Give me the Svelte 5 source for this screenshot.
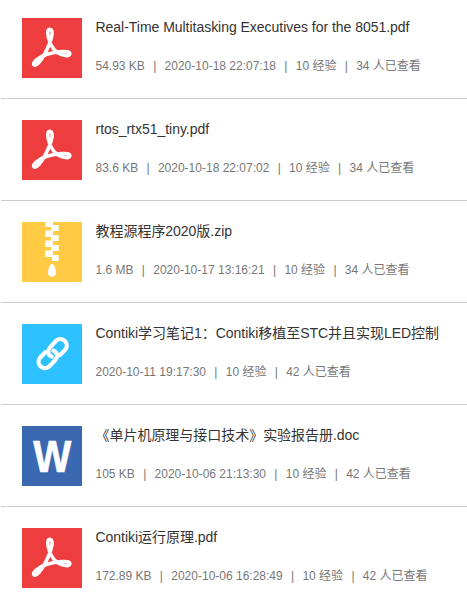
<script>
  const files = [
    { type: 'pdf', title: 'Real-Time Multitasking Executives for the 8051.pdf', meta: ['54.93 KB', '2020-10-18 22:07:18', '10 经验', '34 人已查看'] },
    { type: 'pdf', title: 'rtos_rtx51_tiny.pdf', meta: ['83.6 KB', '2020-10-18 22:07:02', '10 经验', '34 人已查看'] },
    { type: 'zip', title: '教程源程序2020版.zip', meta: ['1.6 MB', '2020-10-17 13:16:21', '10 经验', '34 人已查看'] },
    { type: 'link', title: 'Contiki学习笔记1：Contiki移植至STC并且实现LED控制', meta: ['2020-10-11 19:17:30', '10 经验', '42 人已查看'] },
    { type: 'doc', title: '《单片机原理与接口技术》实验报告册.doc', meta: ['105 KB', '2020-10-06 21:13:30', '10 经验', '42 人已查看'] },
    { type: 'pdf', title: 'Contiki运行原理.pdf', meta: ['172.89 KB', '2020-10-06 16:28:49', '10 经验', '42 人已查看'] }
  ];
</script>

<ul class="list">
  {#each files as file}
    <li class="item">
      <svg class="icon {file.type}" viewBox="0 0 60 60" aria-hidden="true">
        {#if file.type === 'pdf'}
          <path
            d="M27.700 11.300C32 11.300 30 20 26.500 28C23 37 16 47.300 13 47.300C8.500 46 16 39 25 36.300C34 33.500 47.800 32.200 47.800 35.500C47.800 39.500 38 37.500 32.500 32C27 26 23.400 11.300 27.700 11.300Z"
            fill="none" stroke="#fff" stroke-width="3.600" stroke-linejoin="round"
          />
        {:else if file.type === 'zip'}
          <path
            fill="#fff"
            d="M23.300 0H30V3H36.700V9H30V13H36.700V19H30V23H36.700V29H30V33H36.700V39H30V35H23.300V28.500H30V25H23.300V18.500H30V15H23.300V8.500H30V5H23.300Z"
          />
          <path fill="#fff" d="M29 0H31V39H30V35H29Z" />
          <path fill="#fff" d="M30 42C32.500 42 34 48 34 50.800C34 53.300 32.300 54.800 30 54.800S26 53.300 26 50.800C26 48 27.500 42 30 42Z" />
        {:else if file.type === 'link'}
          <g fill="none" stroke="#fff" stroke-width="4.200" stroke-linecap="round">
            <path d="M29.800 32.600C25.600 31 25.200 26.500 28 23.300L34.300 16.600A6.400 6.400 0 0 1 43.300 25.600L38 31" />
            <path d="M31.500 26.700C35.700 28.300 36.100 32.800 33.300 36L27 42.700A6.400 6.400 0 0 1 18 33.700L23.300 28.300" />
          </g>
        {:else}
          <text x="11.200" y="45.700" textLength="38" lengthAdjust="spacingAndGlyphs">W</text>
        {/if}
      </svg>
      <div class="body">
        <div class="title">{file.title}</div>
        <div class="meta">
          {#each file.meta as part, i}{#if i > 0}<i>|</i>{/if}<span>{part}</span>{/each}
        </div>
      </div>
    </li>
  {/each}
</ul>

<style>
  :global(body) {
    background: #fff;
    overflow: hidden;
  }
  .list {
    list-style: none;
    margin: 0 0 0 1px;
    padding: 0;
    height: 606px;
    overflow: hidden;
    font-family: "Liberation Sans", "Noto Sans CJK SC", sans-serif;
  }
  .item {
    display: flex;
    box-sizing: border-box;
    height: 102px;
    padding: 21px 0 0 21px;
    border-bottom: 1px solid #ccc;
  }
  .item:first-child {
    height: 99px;
    padding-top: 18px;
  }
  .icon {
    flex: none;
    width: 60px;
    height: 60px;
    margin-right: 13.5px;
  }
  .pdf { background: #ee3d3f; }
  .zip { background: #ffcb45; }
  .link { background: #2dc2ff; }
  .doc { background: #3b69b1; }
  .icon text {
    fill: #fff;
    stroke: #fff;
    stroke-width: 0.7px;
    font: bold 44px "Liberation Sans", sans-serif;
  }
  .body {
    min-width: 0;
    white-space: nowrap;
  }
  .title {
    height: 20px;
    margin-top: -1px;
    line-height: 20px;
    font-size: 14px;
    letter-spacing: -0.03px;
    color: #333;
  }
  .meta {
    display: flex;
    height: 20px;
    margin-top: 19px;
    line-height: 20px;
    font-size: 12px;
    color: #777;
  }
  .meta i {
    margin: 0 8.300px;
    font-style: normal;
  }
</style>
